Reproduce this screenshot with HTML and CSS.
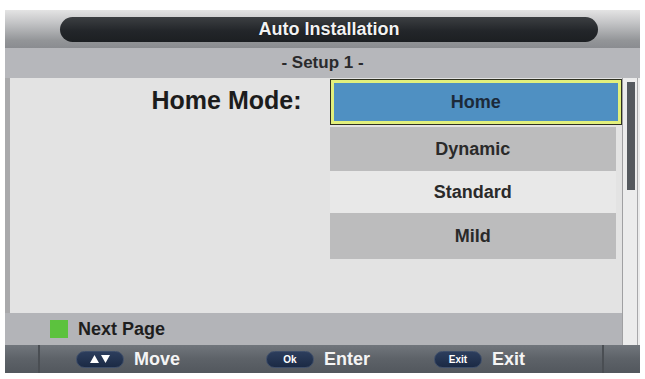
FILE: index.html
```html
<!DOCTYPE html>
<html>
<head>
<meta charset="utf-8">
<link rel="stylesheet" href="styles.css">
</head>
<body>
<div class="screen">
  <div class="title-bar"><div class="title-pill">Auto Installation</div></div>
  <div class="sub-bar">- Setup 1 -</div>
  <div class="middle">
    <div class="main">
      <div class="content">
        <div class="label-col"><span class="label">Home Mode:</span></div>
        <div class="options">
          <div class="opt opt-selected"><span>Home</span></div>
          <div class="opt opt-grey">Dynamic</div>
          <div class="opt opt-light">Standard</div>
          <div class="opt opt-grey">Mild</div>
        </div>
      </div>
      <div class="next-page"><span class="green-key"></span><span>Next Page</span></div>
    </div>
    <div class="scroll"><div class="thumb"></div></div>
  </div>
  <div class="footer">
    <div class="seg seg-left"></div>
    <div class="keys">
      <div class="key key-move">
        <span class="pill"><svg width="22" height="10" viewBox="0 0 22 10"><polygon points="1,9 5.5,1 10,9" fill="#fff"/><polygon points="12,1 21,1 16.5,9" fill="#fff"/></svg></span>
        <span class="key-text">Move</span>
      </div>
      <div class="key key-enter">
        <span class="pill"><span class="pill-text">Ok</span></span>
        <span class="key-text">Enter</span>
      </div>
      <div class="key key-exit">
        <span class="pill"><span class="pill-text">Exit</span></span>
        <span class="key-text">Exit</span>
      </div>
    </div>
    <div class="seg seg-right"></div>
  </div>
</div>
</body>
</html>
```

FILE: styles.css
```css
* { box-sizing: border-box; }
html, body { margin: 0; padding: 0; background: #ffffff; }
body { font-family: "Liberation Sans", Arial, sans-serif; width: 645px; height: 379px; overflow: hidden; }

.screen {
  margin: 10px 0 0 5px;
  width: 635px;
  height: 363px;
  display: flex;
  flex-direction: column;
  background: #e2e2e2;
}

.title-bar {
  height: 38px;
  padding: 7px 0 0 55px;
  background: linear-gradient(180deg, #e4e4e4 0%, #c2c3c5 35%, #939598 80%, #8a8c90 100%);
}
.title-pill {
  width: 538px;
  height: 25px;
  border-radius: 13px;
  background: linear-gradient(180deg, #3c3f42 0%, #23262a 55%, #1c1f22 100%);
  color: #f2f2f2;
  font-weight: bold;
  font-size: 18px;
  line-height: 25px;
  text-align: center;
  text-shadow: 0 0 1px #000;
}

.sub-bar {
  height: 30px;
  background: #b6b7bb;
  color: #2a2a2c;
  font-weight: bold;
  font-size: 17px;
  line-height: 30px;
  text-align: center;
}

.middle {
  height: 267px;
  display: flex;
}
.main {
  width: 617px;
  display: flex;
  flex-direction: column;
}
.content {
  height: 235px;
  display: flex;
  border-left: 5px solid #a9a9ab;
  background: #e3e3e3;
}
.label-col {
  width: 320px;
  padding: 7px 28px 0 0;
  text-align: right;
}
.label {
  font-size: 25px;
  font-weight: bold;
  color: #1c1c1c;
  line-height: 30px;
}
.options {
  width: 293px;
  padding-top: 1px;
  display: flex;
  flex-direction: column;
}
.opt {
  font-size: 18px;
  font-weight: bold;
  color: #2a2a2a;
  text-align: center;
  margin-right: 6px;
}
.opt-selected {
  height: 46px;
  margin-right: 0;
  border: 1px solid #2e3020;
  padding: 0;
}
.opt-selected span {
  display: block;
  height: 100%;
  border: 3px solid #e2f07c;
  background: #4f90c2;
  color: #1c2a3a;
  line-height: 38px;
}
.opt-grey {
  height: 44px;
  line-height: 44px;
  background: #bcbcbd;
  margin-top: 2px;
}
.opt-light {
  height: 42px;
  line-height: 42px;
  background: #e8e8e8;
}
.opt-grey:last-child { height: 46px; line-height: 46px; margin-top: 0; }

.next-page {
  height: 32px;
  background: #b3b4b8;
  display: flex;
  align-items: center;
  padding-left: 45px;
  gap: 10px;
  font-size: 18px;
  font-weight: bold;
  color: #1e1e1e;
}
.green-key {
  width: 18px;
  height: 18px;
  background: #5cc23e;
}

.scroll {
  width: 18px;
  border-left: 1px solid #a0a0a2;
  background: #ececec;
  padding: 4px 0 0 4px;
  position: relative;
}
.scroll::after {
  content: "";
  position: absolute;
  top: 0; bottom: 0; right: 2px;
  width: 1px;
  background: #a8a8aa;
}
.thumb {
  width: 8px;
  height: 108px;
  background: #55595e;
}

.footer {
  height: 28px;
  display: flex;
  background: linear-gradient(180deg, #71767c 0%, #5d6268 50%, #52575d 100%);
}
.seg { height: 100%; }
.seg-left { width: 35px; border-right: 2px solid #4a4e53; }
.seg-right { width: 38px; border-left: 2px solid #4a4e53; }
.keys {
  flex: 1;
  display: flex;
  align-items: center;
  padding-left: 36px;
}
.key { display: flex; align-items: center; gap: 10px; }
.key-move { width: 190px; }
.key-enter { width: 168px; }
.pill {
  width: 48px;
  height: 17px;
  border-radius: 9px;
  background: linear-gradient(180deg, #2c3d5c 0%, #1b2a45 100%);
  border: 1px solid #3e4e6a;
  display: flex;
  align-items: center;
  justify-content: center;
}
.pill-text {
  color: #ffffff;
  font-size: 10px;
  font-weight: bold;
}
.key-text {
  color: #f4f4f4;
  font-size: 18px;
  font-weight: bold;
}
```
